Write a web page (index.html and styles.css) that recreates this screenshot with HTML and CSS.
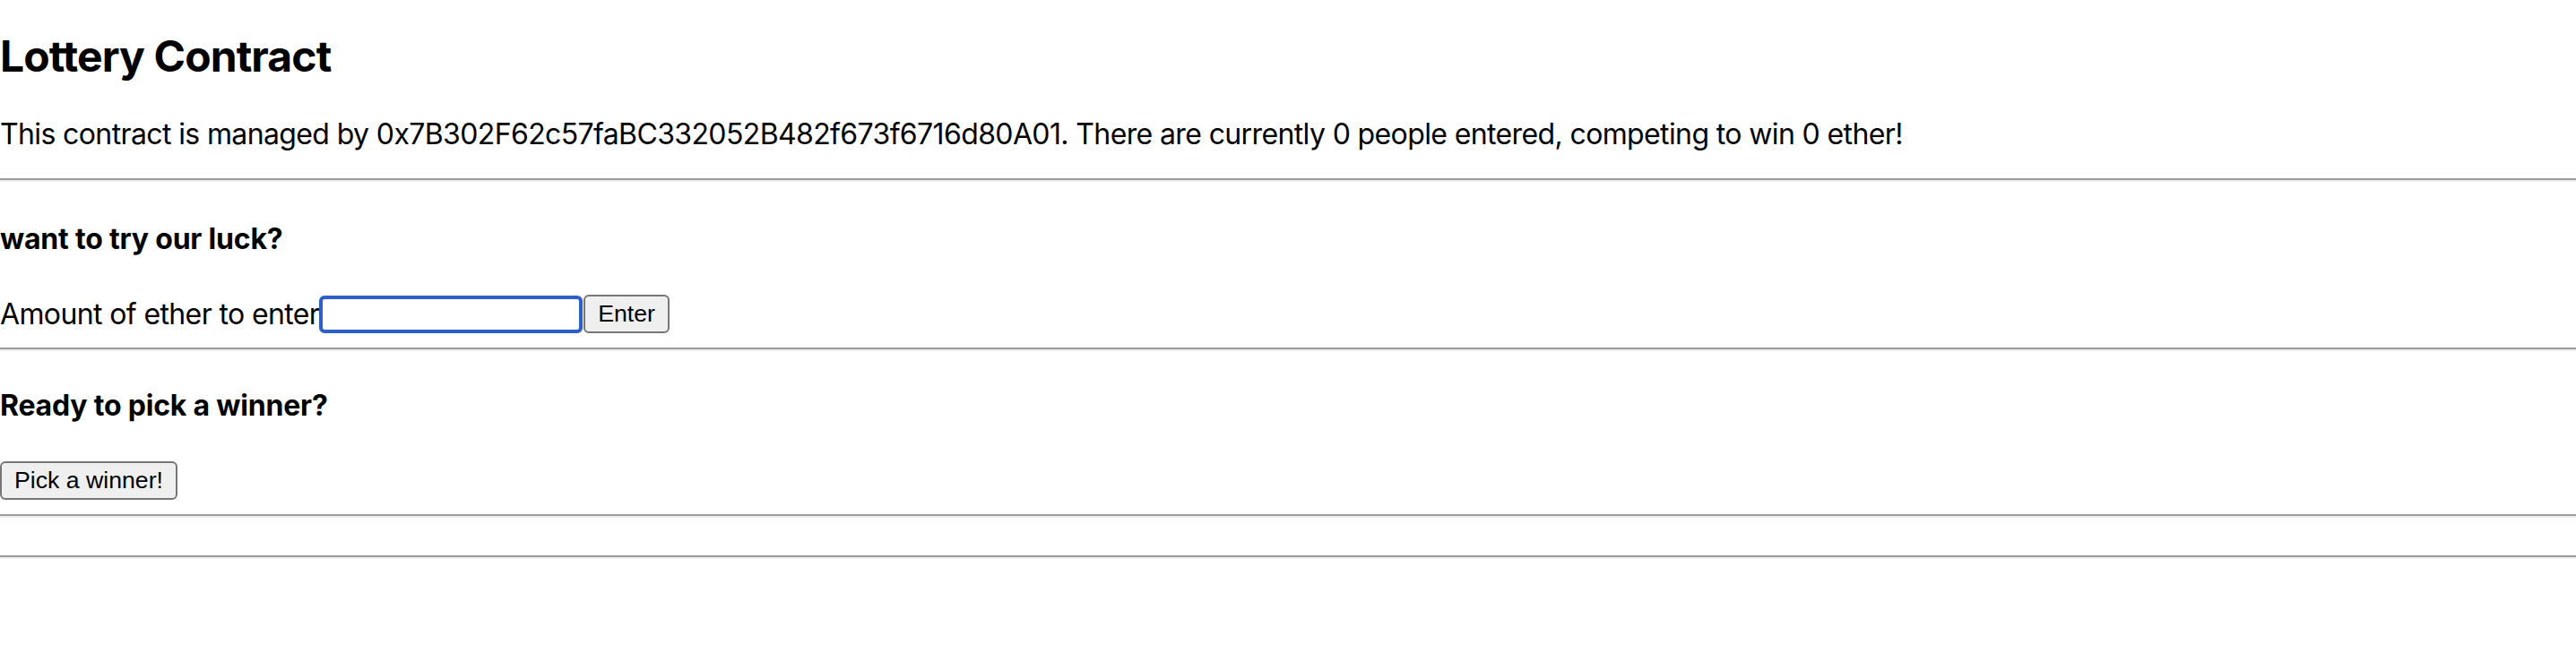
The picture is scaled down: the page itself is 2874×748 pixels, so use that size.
FILE: index.html
```html
<!DOCTYPE html>
<html>
<head>
<meta charset="utf-8">
<title>Lottery Contract</title>
<link rel="stylesheet" href="styles.css">
</head>
<body>
<div class="app">
  <h2 class="title">Lottery Contract</h2>
  <p class="intro">This contract is managed by 0x7B302F62c57faBC332052B482f673f6716d80A01. There are currently 0 people entered, competing to win 0 ether!</p>
  <hr class="rule">
  <form class="enter-form">
    <h4 class="section-title first">want to try our luck?</h4>
    <div class="field">
      <label class="field-label">Amount of ether to enter</label><input class="field-input" type="text"><button class="btn" type="submit">Enter</button>
    </div>
  </form>
  <hr class="rule">
  <h4 class="section-title">Ready to pick a winner?</h4>
  <div class="actions"><button class="btn" type="button">Pick a winner!</button></div>
  <hr class="rule after-actions">
  <h1 class="message"></h1>
  <hr class="rule">
</div>
</body>
</html>
```
FILE: styles.css
```css
html, body {
  margin: 0;
  padding: 0;
  background: #ffffff;
}
body {
  font-family: Inter, "Noto Sans", sans-serif;
  font-size: 32px;
  color: #000000;
}
.app {
  padding-top: 1px;
}
.title {
  font-size: 48px;
  font-weight: 700;
  letter-spacing: -0.9px;
  line-height: 57px;
  margin: 33px 0 40px 0;
}
.intro {
  margin: 0 0 30px 0;
  line-height: 38px;
  letter-spacing: -0.62px;
}
.rule {
  margin: 16px 0;
  border: 0;
  border-top: 2px solid #9a9a9a;
  border-bottom: 2px solid #eeeeee;
  height: 0;
}
.enter-form {
  margin: 0;
}
.section-title {
  font-size: 32px;
  font-weight: 700;
  line-height: 38px;
  letter-spacing: -0.2px;
  margin: 42px 0 43px 0;
}
.section-title.first {
  margin: 45px 0 43px 0;
}
.field {
  display: flex;
  align-items: center;
  height: 43px;
}
.field-label {
  line-height: 38px;
  letter-spacing: -0.62px;
}
.field-input {
  box-sizing: border-box;
  width: 294px;
  height: 42px;
  margin: 0 1px 0 0;
  border: 4px solid #2c5fc9;
  border-radius: 6px;
  outline: none;
  padding: 2px 4px;
  font-family: "Liberation Sans", Arial, sans-serif;
  font-size: 26.67px;
}
.btn {
  box-sizing: border-box;
  height: 43px;
  margin: 0;
  padding: 0 14px;
  border: 2px solid #767676;
  border-radius: 6px;
  background: #efefef;
  color: #000000;
  font-family: "Liberation Sans", Arial, sans-serif;
  font-size: 26.67px;
}
.actions {
  display: flex;
  height: 43px;
}
.rule.after-actions {
  margin-top: 16px;
}
.message {
  margin: 0;
  height: 0;
}
.message + .rule {
  margin-top: 42px;
}
```
